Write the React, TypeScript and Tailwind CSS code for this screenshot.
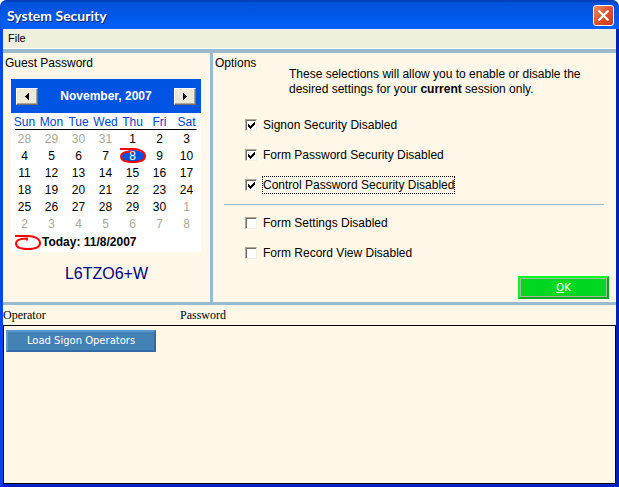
import { useState } from 'react'

const weekdays = ['Sun', 'Mon', 'Tue', 'Wed', 'Thu', 'Fri', 'Sat']

const weeks = [
  [28, 29, 30, 31, 1, 2, 3],
  [4, 5, 6, 7, 8, 9, 10],
  [11, 12, 13, 14, 15, 16, 17],
  [18, 19, 20, 21, 22, 23, 24],
  [25, 26, 27, 28, 29, 30, 1],
  [2, 3, 4, 5, 6, 7, 8],
]

const isOutside = (week: number, day: number) => (week === 0 && day > 7) || (week > 3 && day < 15)

const TodayRing = ({ filled = false }: { filled?: boolean }) => (
  <svg width="28" height="17" viewBox="0 0 28 17" fill="none" aria-hidden="true">
    {filled && <ellipse cx="14" cy="9" rx="12" ry="6" fill="#0054e3" />}
    <path d="M1 2H14C21 2 26 5 26 9C26 13 21 15 14 15C7 15 2 13 2 9.500C2 6 6 4.500 13 4.500V6.500" stroke="#f00" strokeWidth="2" />
  </svg>
)

const ArrowButton = ({ label, path }: { label: string; path: string }) => (
  <button aria-label={label} className="flex h-[17px] w-[22px] items-center justify-center border border-t-white border-r-[#716f64] border-b-[#716f64] border-l-white bg-[#ece9d8] shadow-[inset_-1px_-1px_#aca899]">
    <svg width="4" height="7" viewBox="0 0 4 7" shapeRendering="crispEdges"><path d={path} /></svg>
  </button>
)

const Calendar = () => (
  <div className="mx-2 mt-2 h-[173px] w-[190px] bg-white">
    <div className="flex h-[34px] items-center justify-between bg-[#0054e3] px-[5px] font-bold text-white">
      <ArrowButton label="Previous month" path="M4 0v7L0 3.500z" />
      <span>November, 2007</span>
      <ArrowButton label="Next month" path="M0 0v7L4 3.500z" />
    </div>
    <table className="w-[189px] table-fixed border-collapse text-center">
      <thead className="bg-[linear-gradient(#000,#000)] bg-[length:182px_1px] bg-bottom bg-no-repeat text-[#0046d5]">
        <tr className="h-[17px]">
          {weekdays.map((name) => <th key={name} className="p-0 font-normal">{name}</th>)}
        </tr>
      </thead>
      <tbody>
        {weeks.map((days, week) => (
          <tr key={week} className="h-[17px]">
            {days.map((day) => (
              <td key={day} className={isOutside(week, day) ? 'p-0 text-[#aca899]' : 'p-0'}>
                {week === 1 && day === 8 ? (
                  <div className="relative flex h-[17px] items-center justify-center text-white">
                    <span className="absolute"><TodayRing filled /></span>
                    <span className="relative">{day}</span>
                  </div>
                ) : day}
              </td>
            ))}
          </tr>
        ))}
      </tbody>
    </table>
    <div className="flex h-[20px] items-center pl-[3px] font-bold">
      <TodayRing />
      Today: 11/8/2007
    </div>
  </div>
)

const Option = ({ label, checked = false, focused = false }: { label: string; checked?: boolean; focused?: boolean }) => {
  const [on, setOn] = useState(checked)

  return (
    <label className="flex h-[18px] items-center gap-[5px]">
      <span className="grid size-[12px]">
        <input
          type="checkbox"
          checked={on}
          onChange={() => setOn(!on)}
          className="peer col-start-1 row-start-1 size-[12px] appearance-none border border-t-[#aca899] border-r-[#f1efe2] border-b-[#f1efe2] border-l-[#aca899] bg-white shadow-[inset_1px_1px_#716f64]"
        />
        <svg className="pointer-events-none invisible col-start-1 row-start-1 peer-checked:visible" width="12" height="12" viewBox="0 0 12 12" shapeRendering="crispEdges">
          <path d="M3 5h1v1h1v1h1v-1h1v-1h1v-1h1v-1h1v3h-1v1h-1v1h-1v1h-1v1h-1v-1h-1v-1h-1z" />
        </svg>
      </span>
      <span className={focused ? 'border border-dotted border-black' : 'border border-transparent'}>{label}</span>
    </label>
  )
}

const App = () => {
  return (
    <main className="flex h-screen flex-col bg-[#003dd6] font-['Liberation_Sans',Arial,sans-serif] text-[12px] leading-[16px] text-black">
      <div className="bg-white">
        <header className="flex h-[29px] items-center justify-between rounded-t-[7px] bg-linear-to-b from-[#0050d8] via-[#0057e6] to-[#0060fc] pr-[5px] pl-[7px] shadow-[inset_0_2px_1px_#0040bd]">
          <h1 className="pt-[3px] font-['Lato',sans-serif] text-[14px] font-bold text-white [text-shadow:1px_1px_#0a246a]">System Security</h1>
          <button aria-label="Close" className="mt-[2px] flex size-[21px] items-center justify-center rounded-[3px] border border-white bg-linear-to-br from-[#f08a68] via-[#e0502c] to-[#c43c14]">
            <svg width="11" height="11" viewBox="0 0 11 11" stroke="#fff" strokeWidth="2.200"><path d="M0.500 0.500L10.500 10.500M10.500 0.500L0.500 10.500" /></svg>
          </button>
        </header>
      </div>
      <div className="flex flex-1 flex-col border-x-3 border-b-3 border-r-[#0022b4] border-b-[#0022c8] border-l-[#0046f0] bg-[#fff7e7]">
        <nav className="flex h-[20px] items-center border-b border-white bg-[#efefde] px-[5px] pb-[2px]">
          <button className="text-[11px]">File</button>
        </nav>
        <div className="flex h-[256px] border-t-4 border-b-3 border-[#9cbace]">
          <section className="w-[210px] shrink-0 border-r-3 border-[#9cbace]">
            <h2 className="mt-[2px] ml-[2px]">Guest Password</h2>
            <Calendar />
            <p className="mt-3 text-center text-[16px] leading-[20px] text-[#000084]">L6TZO6+W</p>
          </section>
          <section className="flex flex-1 flex-col">
            <h2 className="mt-[2px] ml-[2px] h-[12px]">Options</h2>
            <p className="ml-[76px] leading-[15px]">
              These selections will allow you to enable or disable the<br />
              desired settings for your <b>current</b> session only.
            </p>
            <div className="mt-[19px] ml-8 flex flex-col gap-3">
              <Option label="Signon Security Disabled" checked />
              <Option label="Form Password Security Disabled" checked />
              <Option label="Control Password Security Disabled" checked focused />
            </div>
            <hr className="mt-[10px] mr-3 ml-[11px] border-[#9cbace]" />
            <div className="mt-[9px] ml-8 flex flex-col gap-3">
              <Option label="Form Settings Disabled" />
              <Option label="Form Record View Disabled" />
            </div>
            <div className="mt-auto mr-[7px] mb-[3px] self-end border-2 border-t-[#00ff21] border-r-[#00aa18] border-b-[#00aa18] border-l-[#00ff21]">
              <button className="block h-[19px] w-[87px] border border-[#adb2a5] bg-[#00d721] font-['DejaVu_Sans',Verdana,sans-serif] text-[10px] text-white"><u>O</u>K</button>
            </div>
          </section>
        </div>
        <div className="flex h-[20px] items-center font-['Liberation_Serif',serif] text-[12px]">
          <span className="w-[177px]">Operator</span>
          <span>Password</span>
        </div>
        <section className="flex-1 border border-black px-[2px] py-1">
          <button className="h-[22px] w-[150px] border-2 border-t-[#5a9ace] border-r-[#316aa5] border-b-[#316aa5] border-l-[#5a9ace] bg-[#4282b5] font-['DejaVu_Sans',Verdana,sans-serif] text-[10px] leading-[16px] text-white">Load Sigon Operators</button>
        </section>
      </div>
    </main>
  )
}

export default App
